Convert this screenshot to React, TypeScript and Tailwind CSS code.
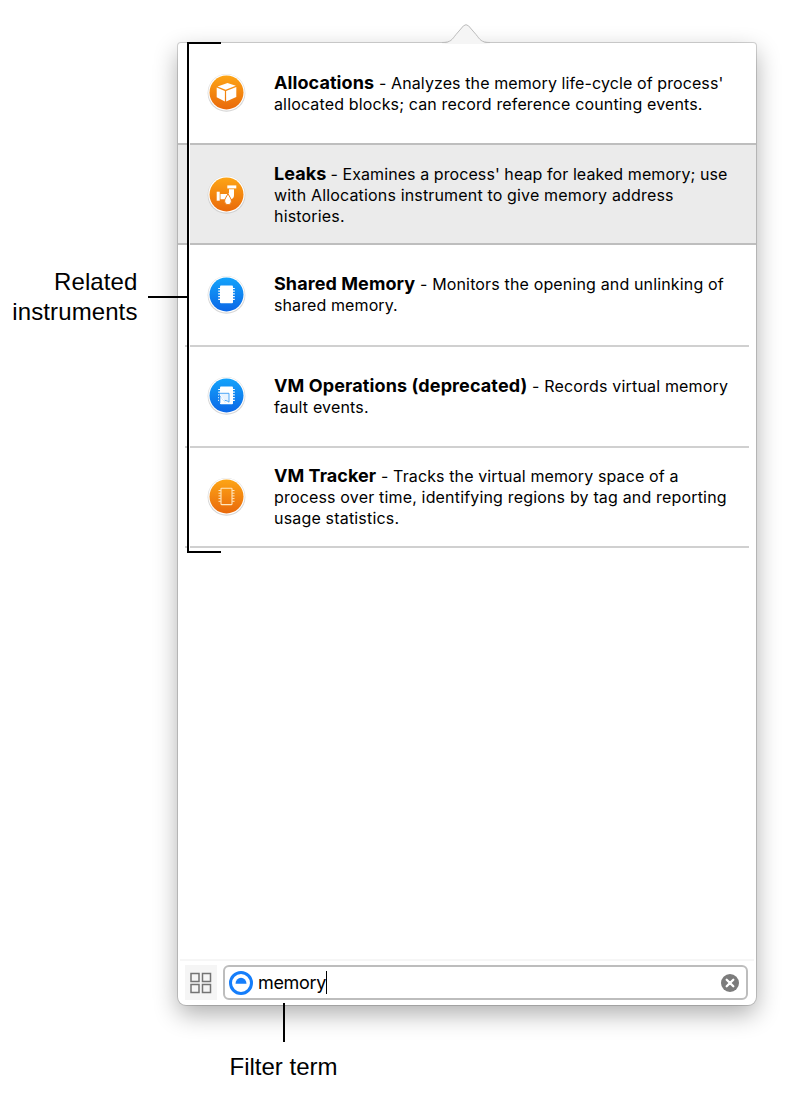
import type { ReactNode } from "react";

const BoxIcon = () => (
  <>
    <path d="M10.600 13.600 20.500 9.900 28.800 12.800 18.600 16.800Z" fill="#fff" />
    <path d="M9.700 14.600 17.900 17.900V28.400L9.700 24.200Z" fill="#fff" />
    <path d="M19.100 17.900 29.300 13.900V24.100L19.100 28.400Z" fill="#fff" />
  </>
);

const LeakIcon = () => (
  <>
    <path d="M20.300 10.400h9v3h-9z" fill="#fff" />
    <path d="M22 14.200h5v6c0 2.500-1.500 4-4 4h-9.500v-5.200h7c1 0 1.500-.5 1.500-1.400z" fill="#fff" />
    <path d="M9.700 16.700h3v9H9.700z" fill="#fff" />
    <path d="M21 18.800c1.800 3.200 3.400 5.200 3.400 7.400a3.400 3.600 0 0 1-6.800 0c0-2.200 1.600-4.200 3.400-7.400z" fill="#fff" stroke="#f07c10" strokeWidth="1" />
  </>
);

const Pins = () => (
  <path
    d="M11.2 13.5h3M11.2 16.2h3M11.2 18.9h3M11.2 21.6h3M11.2 24.3h3M24.8 13.5h3M24.8 16.2h3M24.8 18.9h3M24.8 21.6h3M24.8 24.3h3"
    stroke="#fff"
    strokeWidth="1.2"
  />
);

const ChipIcon = () => (
  <>
    <Pins />
    <rect x="13" y="10.6" width="13" height="17.6" rx="1" fill="#fff" />
  </>
);

const ChipPageIcon = () => (
  <>
    <Pins />
    <rect x="13" y="10.6" width="13" height="17.6" rx="1" fill="#fff" />
    <path d="M12.500 17.300h9.500v8.900c-1-1-2.300-1.600-4.300-1.800" fill="#e9f4ff" stroke="#3c9df5" strokeWidth=".9" />
    <path d="M12 17.300c1.500 3.500 3 6 6.500 9.700h-6.500z" fill="#1b86f2" />
    <path d="M13.300 20.600v7.200h5.800z" fill="#fff" />
  </>
);

const ChipOutlineIcon = () => (
  <>
    <path
      d="M11.5 13.5h2.4M11.5 16.2h2.4M11.5 18.9h2.4M11.5 21.6h2.4M11.5 24.3h2.4M25.1 13.5h2.4M25.1 16.2h2.4M25.1 18.9h2.4M25.1 21.6h2.4M25.1 24.3h2.4"
      stroke="#ffe7c0"
      strokeWidth="1"
    />
    <rect x="14" y="11.2" width="11" height="16.4" rx=".6" fill="none" stroke="#ffe7c0" strokeWidth="1.1" />
  </>
);

function Badge({ color, children }: { color: "orange" | "blue"; children: ReactNode }) {
  return (
    <svg className="mb-px ml-[29px] mr-[0.500px] size-[39px] shrink-0" viewBox="0 0 39 39">
      <defs>
        <linearGradient id="orange" x1="0" y1="0" x2="0" y2="1">
          <stop offset="0" stopColor="#fda516" />
          <stop offset="1" stopColor="#e9690b" />
        </linearGradient>
        <linearGradient id="blue" x1="0" y1="0" x2="0" y2="1">
          <stop offset="0" stopColor="#13a3fb" />
          <stop offset="1" stopColor="#0c67e6" />
        </linearGradient>
      </defs>
      <circle cx="19.5" cy="19.9" r="18.9" fill="#c4c4c4" opacity=".7" />
      <circle cx="19.5" cy="19.4" r="18.2" fill="#fff" />
      <circle cx="19.5" cy="19.4" r="17" fill={color === "orange" ? "url(#orange)" : "url(#blue)"} />
      {children}
    </svg>
  );
}

function Row({
  color,
  icon,
  title,
  titleClass,
  first,
  firstClass,
  rest,
  row,
}: {
  color: "orange" | "blue";
  icon: ReactNode;
  title: string;
  titleClass: string;
  first: string;
  firstClass: string;
  rest: [string, string][];
  row: string;
}) {
  return (
    <li className={`flex items-center ${row}`}>
      <Badge color={color}>{icon}</Badge>
      <div className="ml-[27.5px] whitespace-nowrap text-[16px] leading-[21px] text-black">
        <div className="flex items-baseline">
          <strong className={`block text-[18px] font-bold leading-[21px] ${titleClass}`}>{title}</strong>
          <span className={firstClass}>{first}</span>
        </div>
        {rest.map(([text, cls]) => (
          <div key={text}>
            <span className={cls}>{text}</span>
          </div>
        ))}
      </div>
    </li>
  );
}

export default function App() {
  return (
    <main className="relative flex h-[1094px] w-[791px] flex-col overflow-hidden bg-white">
      <div className="flex h-[1005px] pt-[43px]">
        <div className="flex w-[178px] shrink-0 justify-end pr-[40.500px] pt-[224px] text-right font-['Liberation_Sans',sans-serif] text-[24px] leading-[30px]">
          <p className="whitespace-nowrap tracking-[0.1px]">
            Related
            <br />
            instruments
          </p>
        </div>
        <section className="relative flex h-[962px] w-[578px] flex-col rounded-b-[8px] rounded-t-[3px] bg-white font-['Inter',sans-serif] shadow-[0_0_0_1px_rgba(0,0,0,0.16),0_9px_25px_rgba(0,0,0,0.32)]">
          <svg className="absolute left-[264px] top-[-20px] h-[22px] w-[48px]" viewBox="0 0 48 22">
            <path d="M0 20.5C9 20 10 16.500 14 11.500L21 3Q24 0 27 3L34 11.500C38 16.500 39 20 48 20.500V21H0Z" fill="#f5f5f5" />
            <path d="M0 19.500C9 19.500 10 16.500 14 11.500L21.500 2.800Q24 .6 26.500 2.800L34 11.500C38 16.500 39 19.500 48 19.500" fill="none" stroke="#bcbcbc" />
          </svg>
          <ul className="flex grow flex-col">
            <Row
              row="h-[100px]"
              color="orange"
              icon={<BoxIcon />}
              title="Allocations"
              titleClass="w-[105px] tracking-[0.08px]"
              first="- Analyzes the memory life-cycle of process'"
              firstClass="tracking-[0.1px]"
              rest={[["allocated blocks; can record reference counting events.", "tracking-[0.14px]"]]}
            />
            <Row
              row="h-[102px] border-y-2 border-[#bebebe] bg-[#ebebeb] pt-px"
              color="orange"
              icon={<LeakIcon />}
              title="Leaks"
              titleClass="w-[56.500px] tracking-[0.05px]"
              first="- Examines a process' heap for leaked memory; use"
              firstClass="tracking-[0.08px]"
              rest={[
                ["with Allocations instrument to give memory address", "tracking-[0.16px]"],
                ["histories.", "tracking-[0.18px]"],
              ]}
            />
            <Row
              row="h-[100px] pb-px"
              color="blue"
              icon={<ChipIcon />}
              title="Shared Memory"
              titleClass="w-[146px] tracking-[0.08px]"
              first="- Monitors the opening and unlinking of"
              firstClass="tracking-[0.15px]"
              rest={[["shared memory.", "tracking-[0.1px]"]]}
            />
            <li className="ml-[7px] mr-[7px] h-[2px] bg-[#d0d0d0]" />
            <Row
              row="h-[99px] pb-px"
              color="blue"
              icon={<ChipPageIcon />}
              title="VM Operations (deprecated)"
              titleClass="w-[258px] tracking-[0.11px]"
              first="- Records virtual memory"
              firstClass="tracking-[0.18px]"
              rest={[["fault events.", "tracking-[0.16px]"]]}
            />
            <li className="ml-[7px] mr-[7px] h-[2px] bg-[#d0d0d0]" />
            <Row
              row="h-[98px]"
              color="orange"
              icon={<ChipOutlineIcon />}
              title="VM Tracker"
              titleClass="w-[107px] tracking-[0.05px]"
              first="- Tracks the virtual memory space of a"
              firstClass="tracking-[0.12px]"
              rest={[
                ["process over time, identifying regions by tag and reporting", "tracking-[0.17px]"],
                ["usage statistics.", "tracking-[0.18px]"],
              ]}
            />
            <li className="ml-[7px] mr-[7px] h-[2px] bg-[#d0d0d0]" />
          </ul>
          <footer className="mx-0.5 flex h-[46px] items-start border-t-2 border-[#f6f6f6] pl-[5px] pt-[4px]">
            <div className="flex h-[35px] w-8 items-center justify-center bg-[#f5f5f5]">
              <svg className="size-[22px]" viewBox="0 0 22 22" fill="none" stroke="#747474" strokeWidth="1.5">
                <path d="M1 1.500h8v8h-8zM12.500 1.500h8v8h-8zM1 12.500h8v8h-8zM12.500 12.500h8v8h-8z" />
              </svg>
            </div>
            <div className="ml-[6px] flex h-[35px] w-[525px] items-center rounded-[6px] border-2 border-[#bdbdbd] pl-[4px] pr-[7px]">
              <svg className="size-6" viewBox="0 0 24 24">
                <circle cx="12" cy="12" r="10.500" fill="none" stroke="#157efb" strokeWidth="3" />
                <path d="M6.500 12.800a5.500 6 0 0 1 11 0z" fill="#157efb" />
              </svg>
              <span className="ml-[5px] whitespace-nowrap text-[18px] leading-6 tracking-[-0.35px]">memory</span>
              <span className="h-[23px] w-[1.5px] bg-black" />
              <svg className="ml-auto size-[18px]" viewBox="0 0 18 18">
                <circle cx="9" cy="9" r="9" fill="#7c7c7c" />
                <path d="m5.700 5.700 6.600 6.600m0-6.600-6.600 6.600" stroke="#fff" strokeWidth="2.300" strokeLinecap="round" />
              </svg>
            </div>
          </footer>
        </section>
      </div>
      <p className="ml-[229.500px] mt-[47px] whitespace-nowrap font-['Liberation_Sans',sans-serif] text-[24px] leading-[30px]">Filter term</p>
      <div className="absolute left-[187px] top-[42px] h-[511px] w-[34px] border-y-2 border-l-2 border-black" />
      <div className="absolute left-[189px] top-[45px] h-[505px] w-px bg-white" />
      <div className="absolute left-[148px] top-[296px] h-[2px] w-[39px] bg-black" />
      <div className="absolute left-[283px] top-[1003px] h-[39px] w-[2px] bg-black" />
    </main>
  );
}
